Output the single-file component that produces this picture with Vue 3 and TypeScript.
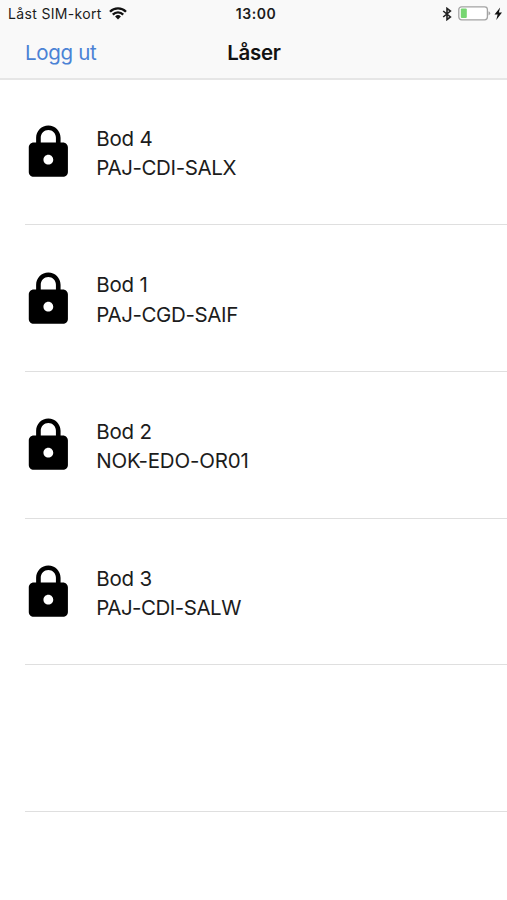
<script setup lang="ts">
interface Lock {
  name: string
  code: string
}

const locks: Lock[] = [
  { name: 'Bod 4', code: 'PAJ-CDI-SALX' },
  { name: 'Bod 1', code: 'PAJ-CGD-SAIF' },
  { name: 'Bod 2', code: 'NOK-EDO-OR01' },
  { name: 'Bod 3', code: 'PAJ-CDI-SALW' },
]
</script>

<template>
  <div class="screen">
    <header class="header">
      <div class="status">
        <div class="carrier">
          <span>Låst SIM-kort</span>
          <svg class="wifi" viewBox="0 0 18 13">
            <path d="M1 4.8A11.2 11.2 0 0 1 17 4.8" />
            <path d="M3.8 7.6A7.3 7.3 0 0 1 14.2 7.6" />
            <path class="solid" d="M9 12.4L6.1 9.5A4.2 4.2 0 0 1 11.9 9.5Z" />
          </svg>
        </div>
        <div class="time">13:00</div>
        <div class="indicators">
          <svg class="bluetooth" viewBox="0 0 10 14">
            <path d="M1.2 4L8.4 9.9L5 12.6V1.4L8.4 4.1L1.2 10" />
          </svg>
          <svg class="battery" viewBox="0 0 33 15">
            <rect class="shell" x="0.8" y="0.8" width="28.6" height="13" rx="2.8" />
            <rect class="charge" x="2.8" y="2.6" width="6" height="9.4" rx="1" />
            <path class="cap" d="M30.5 5.2Q32.2 5.8 32.2 7.3T30.5 9.4Z" />
          </svg>
          <svg class="bolt" viewBox="0 0 8 13">
            <path d="M5.8 0.5L0.4 7.2H3.4L2.1 12.5L7.6 5.4H4.6Z" />
          </svg>
        </div>
      </div>
      <nav class="nav">
        <a class="logout">Logg ut</a>
        <h1 class="title">Låser</h1>
      </nav>
    </header>
    <ul class="list">
      <li v-for="lock in locks" :key="lock.code" class="row">
        <svg class="lock" viewBox="0 0 24 24">
          <path
            d="M18 8h-1V6c0-2.76-2.24-5-5-5S7 3.24 7 6v2H6c-1.1 0-2 .9-2 2v10c0 1.1.9 2 2 2h12c1.1 0 2-.9 2-2V10c0-1.1-.9-2-2-2zm-6 9c-1.1 0-2-.9-2-2s.9-2 2-2 2 .9 2 2-.9 2-2 2zm3.1-9H8.9V6c0-1.71 1.39-3.1 3.1-3.1s3.1 1.39 3.1 3.1v2z"
          />
        </svg>
        <div class="text">
          <div class="name">{{ lock.name }}</div>
          <div class="code">{{ lock.code }}</div>
        </div>
      </li>
      <li class="row"></li>
    </ul>
  </div>
</template>

<style>
body {
  margin: 0;
  background: #fff;
}
</style>

<style scoped>
.screen {
  width: 507px;
  height: 900px;
  overflow: hidden;
  background: #fff;
  color: #1c1c1c;
  font-family: Inter, 'Liberation Sans', sans-serif;
}
.header {
  box-sizing: border-box;
  height: 80px;
  background: #f9f9f9;
  border-bottom: 2px solid #e6e6e6;
}
.status {
  display: grid;
  grid-template-columns: 1fr auto 1fr;
  align-items: center;
  height: 27px;
  padding: 0 5px 0 8px;
  font-size: 14px;
  line-height: 27px;
}
.carrier {
  display: flex;
  align-items: center;
  gap: 7px;
  letter-spacing: 0.34px;
}
.wifi {
  width: 18px;
  height: 13px;
  fill: none;
  stroke: #111;
  stroke-width: 2.3;
}
.wifi .solid {
  fill: #111;
  stroke: none;
}
.time {
  margin-left: 2px;
  font-weight: 600;
  letter-spacing: 0.5px;
}
.indicators {
  display: flex;
  justify-content: flex-end;
  align-items: center;
}
.bluetooth {
  width: 10px;
  height: 14px;
  margin-right: 6.5px;
  fill: none;
  stroke: #222;
  stroke-width: 1.6;
}
.battery {
  width: 33px;
  height: 15px;
  margin-right: 2.5px;
}
.shell {
  fill: #fff;
  stroke: #a3a3a3;
  stroke-width: 1.3;
}
.charge {
  fill: #77d672;
}
.cap {
  fill: #a3a3a3;
}
.bolt {
  width: 8.5px;
  height: 13.5px;
  fill: #111;
}
.nav {
  display: grid;
  grid-template-columns: 1fr auto 1fr;
  height: 51px;
  padding: 0 25px;
  line-height: 52px;
}
.logout {
  color: #4a82d5;
  font-size: 20.5px;
  letter-spacing: -0.3px;
}
.title {
  margin: 0 0 0 1px;
  color: #111;
  font-size: 20.5px;
  font-weight: 600;
  letter-spacing: -0.3px;
}
.list {
  margin: 0;
  padding: 0 0 0 25px;
  list-style: none;
}
.row {
  box-sizing: border-box;
  display: flex;
  align-items: flex-start;
  height: 146.67px;
  padding-top: 44.3px;
  border-bottom: 1px solid #dfdfdf;
}
.row:first-child {
  height: 145.3px;
  padding-top: 43px;
}
.lock {
  width: 58.7px;
  height: 58.7px;
  margin-left: -6px;
  flex: none;
}
.text {
  margin: 0.7px 0 0 18.5px;
  font-size: 20.5px;
  line-height: 29.3px;
}
.name {
  letter-spacing: -0.2px;
}
.code {
  letter-spacing: -0.38px;
}
.row:nth-child(3) .code {
  letter-spacing: -0.16px;
}
.row:nth-child(4) .code {
  letter-spacing: -0.5px;
}
</style>
